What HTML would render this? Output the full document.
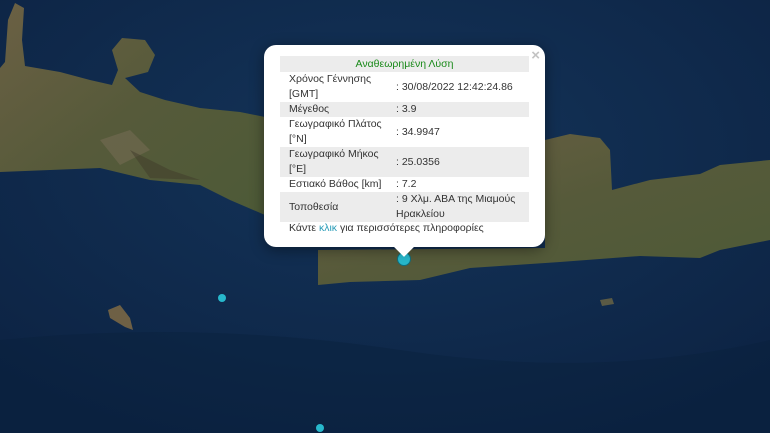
<!DOCTYPE html>
<html><head><meta charset="utf-8"><style>
html,body{margin:0;padding:0;width:770px;height:433px;overflow:hidden;background:#10294a;font-family:"Liberation Sans",Arial,sans-serif;}
#map{position:absolute;left:0;top:0;width:770px;height:433px;}
.pop{position:absolute;left:264px;top:45px;width:281px;height:202px;background:#fff;border-radius:12px;box-shadow:0 3px 14px rgba(0,0,0,.4);}
.tip{position:absolute;left:397px;top:240px;width:14px;height:14px;background:#fff;transform:rotate(45deg);z-index:2;}
.x{position:absolute;right:5px;top:2px;color:#c3c3c3;font-size:15px;font-weight:bold;}
table{position:absolute;left:16px;top:11px;width:249px;border-collapse:collapse;font-size:10.5px;color:#333;line-height:15px;}
td{padding:0 0 0 9px;vertical-align:middle;}
tr.g{background:#ececec;}
td.v{padding-left:3px;width:133px;}
.h td{text-align:center;color:#1a8a1a;height:16px;padding:0;}
.lnk{position:absolute;left:25px;top:177px;font-size:10.5px;color:#333;}
.lnk span{color:#2a9cb8;}
.dot{position:absolute;border-radius:50%;background:#27b8cc;}
</style></head><body>
<svg id="map" width="770" height="433" viewBox="0 0 770 433">
<defs>
<radialGradient id="sea" cx="50%" cy="35%" r="75%"><stop offset="0" stop-color="#143459"/><stop offset="1" stop-color="#0c2242"/></radialGradient>
<linearGradient id="land" x1="0" y1="0" x2="1" y2="1"><stop offset="0" stop-color="#6b6044"/><stop offset=".5" stop-color="#565a3a"/><stop offset="1" stop-color="#4d5a37"/></linearGradient>
</defs>
<rect width="770" height="433" fill="url(#sea)"/>
<path d="M0 340 Q200 320 400 350 T770 340 L770 433 L0 433Z" fill="#0a1f3a" opacity=".35"/>
<path d="M0 68 L5 62 L8 20 L15 3 L24 8 L22 40 L25 66 L60 72 L90 80 L112 85 L118 70 L112 50 L122 38 L145 40 L155 55 L148 72 L125 78 L140 92 L165 100 L200 108 L240 112 L265 117 L265 215 L230 200 L200 185 L150 180 L100 168 L50 170 L0 172Z" fill="url(#land)"/>
<path d="M318 250 L545 248 L545 140 L570 134 L600 138 L610 150 L612 190 L650 180 L700 174 L720 165 L770 160 L770 240 L720 250 L700 258 L640 256 L560 262 L470 268 L420 280 L350 282 L318 285Z" fill="url(#land)"/>
<path d="M108 310 L120 305 L130 318 L133 330 L125 327 L110 318Z" fill="#6e6045"/>
<path d="M600 300 L612 298 L614 304 L602 306Z" fill="#5a5a45"/>
<path d="M100 140 L130 130 L150 150 L120 165Z" fill="#7a6e58" opacity=".5"/>
<path d="M130 150 L170 170 L200 180 L150 178Z" fill="#3f3a2a" opacity=".5"/>
</svg>
<div class="dot" style="left:397px;top:252px;width:14px;height:14px;border:1px solid #0e6f7f;box-sizing:border-box"></div>
<div class="dot" style="left:218px;top:294px;width:8px;height:8px"></div>
<div class="dot" style="left:316px;top:424px;width:8px;height:8px"></div>
<div class="pop">
<div class="x">×</div>
<table>
<tr class="g h"><td colspan="2">Αναθεωρημένη Λύση</td></tr>
<tr style="height:30px"><td>Χρόνος Γέννησης<br>[GMT]</td><td class="v">: 30/08/2022 12:42:24.86</td></tr>
<tr class="g" style="height:15px"><td>Μέγεθος</td><td class="v">: 3.9</td></tr>
<tr style="height:30px"><td>Γεωγραφικό Πλάτος<br>[°N]</td><td class="v">: 34.9947</td></tr>
<tr class="g" style="height:29px"><td>Γεωγραφικό Μήκος<br>[°E]</td><td class="v">: 25.0356</td></tr>
<tr style="height:15px"><td>Εστιακό Βάθος [km]</td><td class="v">: 7.2</td></tr>
<tr class="g" style="height:30px"><td>Τοποθεσία</td><td class="v">: 9 Χλμ. ΑΒΑ της Μιαμούς<br>Ηρακλείου</td></tr>
</table>
<div class="lnk">Κάντε <span>κλικ</span> για περισσότερες πληροφορίες</div>
</div>
<div class="tip"></div>
</body></html>
